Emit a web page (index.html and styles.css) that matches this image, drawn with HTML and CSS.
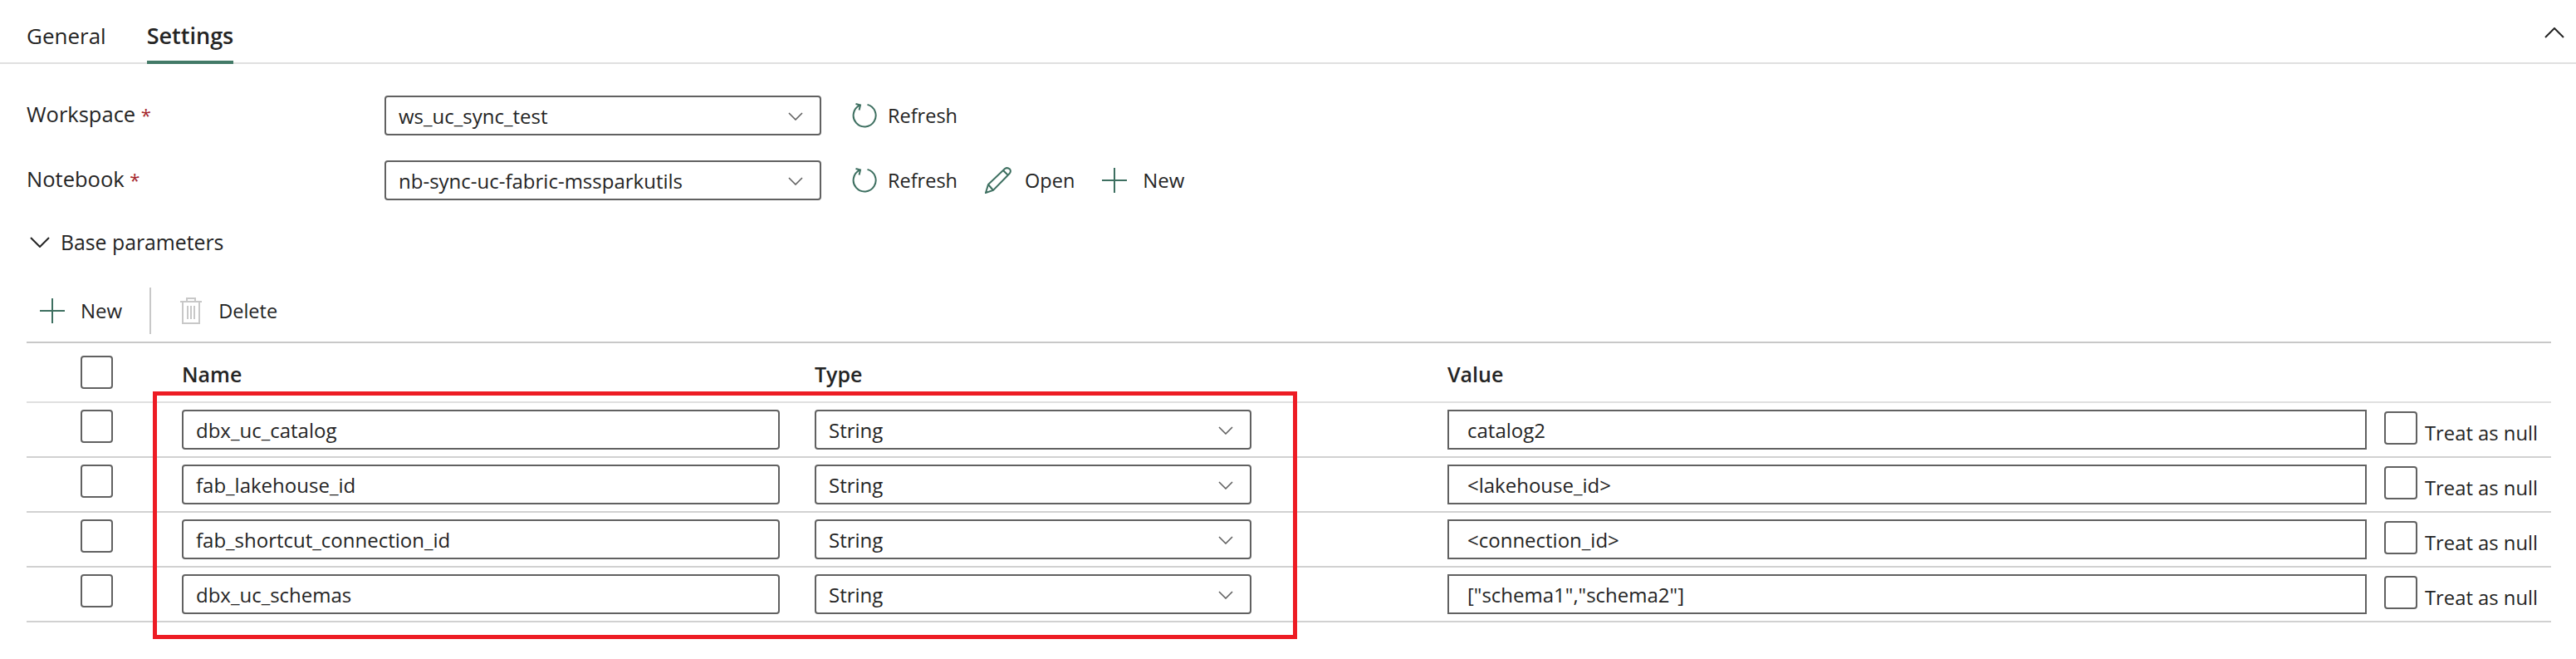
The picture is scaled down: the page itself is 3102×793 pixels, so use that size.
FILE: index.html
```html
<!DOCTYPE html>
<html>

<head>
	<meta http-equiv="Content-Type" content="text/html; charset=UTF-8">
	<title>Settings</title>

	<link rel="stylesheet" href="styles.css">
</head>

<body>
	<div class="tabs">
		<div class="tab">General</div>
		<div class="tab active">Settings</div>
		<svg class="tabs-toggle" width="24" height="13" viewBox="0 0 24 13"><path d="M1 12 L12 1 L23 12" /></svg>
	</div>

	<div class="form-row first">
		<div class="label">Workspace <span class="req">*</span></div>
		<div class="select"><span>ws_uc_sync_test</span><svg class="chev" width="18" height="10" viewBox="0 0 18 10"><path d="M1 1 L9 9 L17 1" /></svg></div>
		<div class="action"><svg class="icon" width="30" height="30" viewBox="0 0 30 30"><path d="M18.5 1.9 A13.5 13.5 0 1 1 9.5 2.7" /><path d="M4.5 1 L10 2.5 L8.6 8.4" /></svg>Refresh</div>
	</div>

	<div class="form-row">
		<div class="label">Notebook <span class="req">*</span></div>
		<div class="select"><span>nb-sync-uc-fabric-mssparkutils</span><svg class="chev" width="18" height="10" viewBox="0 0 18 10"><path d="M1 1 L9 9 L17 1" /></svg></div>
		<div class="action"><svg class="icon" width="30" height="30" viewBox="0 0 30 30"><path d="M18.5 1.9 A13.5 13.5 0 1 1 9.5 2.7" /><path d="M4.5 1 L10 2.5 L8.6 8.4" /></svg>Refresh</div>
		<div class="action pencil"><svg class="icon" width="32" height="32" viewBox="0 0 32 32"><path d="M1 31 L4 21 L24 2 Q27 0 30 2.5 Q32 5.5 29.5 8 L10 28 Z M4 21 L10 28 M22 4 L28 10" /></svg>Open</div>
		<div class="action plus"><svg class="icon" width="30" height="30" viewBox="0 0 30 30"><path d="M15 0 V30 M0 15 H30" /></svg>New</div>
	</div>

	<div class="section-head">
		<svg class="section-chev" width="24" height="13" viewBox="0 0 24 13"><path d="M1 1 L12 12 L23 1" /></svg>
		Base parameters
	</div>

	<div class="toolbar">
		<div class="action plus"><svg class="icon" width="30" height="30" viewBox="0 0 30 30"><path d="M15 0 V30 M0 15 H30" /></svg>New</div>
		<div class="divider"></div>
		<div class="action trash"><svg class="icon" width="26" height="32" viewBox="0 0 26 32"><path d="M0 5 H26 M8 5 V1 H18 V5 M3 5 V31 H23 V5 M9 10 V26 M13 10 V26 M17 10 V26" /></svg>Delete</div>
	</div>

	<div class="params">
		<div class="param-row param-head">
			<div class="cell-check"><div class="check"></div></div>
			<div>Name</div>
			<div>Type</div>
			<div>Value</div>
		</div>

		<div class="param-row">
			<div class="cell-check"><div class="check"></div></div>
			<div class="cell"><div class="field name-field">dbx_uc_catalog</div></div>
			<div class="cell"><div class="select type-select"><span>String</span><svg class="chev" width="18" height="10" viewBox="0 0 18 10"><path d="M1 1 L9 9 L17 1" /></svg></div></div>
			<div class="cell"><div class="field value-field">catalog2</div></div>
			<div class="null-cell"><div class="check"></div><span>Treat as null</span></div>
		</div>

		<div class="param-row">
			<div class="cell-check"><div class="check"></div></div>
			<div class="cell"><div class="field name-field">fab_lakehouse_id</div></div>
			<div class="cell"><div class="select type-select"><span>String</span><svg class="chev" width="18" height="10" viewBox="0 0 18 10"><path d="M1 1 L9 9 L17 1" /></svg></div></div>
			<div class="cell"><div class="field value-field">&lt;lakehouse_id&gt;</div></div>
			<div class="null-cell"><div class="check"></div><span>Treat as null</span></div>
		</div>

		<div class="param-row">
			<div class="cell-check"><div class="check"></div></div>
			<div class="cell"><div class="field name-field">fab_shortcut_connection_id</div></div>
			<div class="cell"><div class="select type-select"><span>String</span><svg class="chev" width="18" height="10" viewBox="0 0 18 10"><path d="M1 1 L9 9 L17 1" /></svg></div></div>
			<div class="cell"><div class="field value-field">&lt;connection_id&gt;</div></div>
			<div class="null-cell"><div class="check"></div><span>Treat as null</span></div>
		</div>

		<div class="param-row">
			<div class="cell-check"><div class="check"></div></div>
			<div class="cell"><div class="field name-field">dbx_uc_schemas</div></div>
			<div class="cell"><div class="select type-select"><span>String</span><svg class="chev" width="18" height="10" viewBox="0 0 18 10"><path d="M1 1 L9 9 L17 1" /></svg></div></div>
			<div class="cell"><div class="field value-field">["schema1","schema2"]</div></div>
			<div class="null-cell"><div class="check"></div><span>Treat as null</span></div>
		</div>

		<!-- annotation drawn over the table -->
		<div class="callout"></div>
	</div>
</body>

</html>
```

FILE: styles.css
```css
* {
	margin: 0;
	padding: 0;
	box-sizing: border-box;
}

body {
	min-height: 793px;
	background: #fff;
	color: #242424;
	font-family: "Open Sans", "Liberation Sans", sans-serif;
	font-size: 24px;
	line-height: 30px;
}

svg {
	display: block;
	flex: none;
	fill: none;
}

/* tabs */
.tabs {
	display: flex;
	align-items: stretch;
	height: 77px;
	padding: 0 14px 0 32px;
	gap: 49px;
	border-bottom: 2px solid #e0e0e0;
	font-size: 26px;
}

.tab {
	padding-top: 28px;
	margin-bottom: -2px;
	border-bottom: 4px solid transparent;
}

.tab.active {
	font-size: 27px;
	font-weight: 600;
	border-bottom-color: #437a67;
}

.tabs-toggle {
	margin: 33px 0 0 auto;
}

.tabs-toggle path,
.section-chev path {
	stroke: #242424;
	stroke-width: 2;
}

/* form rows */
.form-row {
	display: flex;
	align-items: center;
	height: 48px;
	margin-top: 30px;
	padding-left: 32px;
}

.form-row.first {
	margin-top: 38px;
}

.label {
	width: 431px;
	flex: none;
	padding-bottom: 4px;
	font-size: 25.5px;
}

.req {
	color: #a4262c;
	font-size: 22px;
}

.select,
.field {
	display: flex;
	align-items: center;
	justify-content: space-between;
	height: 48px;
	border: 2px solid #616161;
	border-radius: 4px;
	padding: 2px 20px 0 15px;
	background: #fff;
}

.form-row .select {
	width: 526px;
	flex: none;
	margin-right: 37px;
}

.chev path {
	stroke: #616161;
	stroke-width: 1.6;
}

.action {
	display: flex;
	align-items: center;
	gap: 13px;
	margin-right: 33px;
	font-size: 23.5px;
}

.action .icon path {
	stroke: #3d6f60;
	stroke-width: 2;
}

.action.pencil {
	gap: 16px;
}

.action.plus {
	gap: 19px;
	font-size: 24px;
}

/* base parameters */
.section-head {
	display: flex;
	align-items: center;
	gap: 13px;
	height: 30px;
	margin-top: 35px;
	padding-left: 36px;
	font-weight: 500;
	font-size: 24.8px;
}

.toolbar {
	display: flex;
	align-items: center;
	height: 56px;
	margin-top: 40px;
	padding-left: 48px;
}

.divider {
	width: 2px;
	height: 56px;
	background: #c8c8c8;
}

.toolbar .plus {
	margin-right: 33px;
}

.toolbar .trash {
	margin-left: 35px;
	gap: 20px;
}

.action.trash .icon path {
	stroke: #c8c8c8;
}

/* parameter table */
.params {
	position: relative;
	width: 3040px;
	margin: 9px 0 0 32px;
	border-top: 2px solid #c8c8c8;
}

.param-row {
	display: grid;
	grid-template-columns: 187px 762px 762px 1128px 1fr;
	height: 66px;
	padding-top: 8px;
	border-bottom: 2px solid #d1d1d1;
}

.param-head {
	height: 72px;
	padding-top: 15px;
	font-weight: 600;
	font-size: 25px;
	line-height: 44px;
	border-bottom-color: #e0e0e0;
}

.cell-check {
	padding-left: 65px;
}

.check {
	width: 39px;
	height: 40px;
	border: 2px solid #616161;
	border-radius: 4px;
}

.name-field {
	width: 720px;
}

.type-select {
	width: 526px;
}

.value-field {
	width: 1107px;
	border-radius: 0;
	padding-left: 22px;
}

.null-cell {
	display: flex;
	align-items: flex-start;
	gap: 9px;
	padding-top: 2px;
}

.null-cell .check {
	width: 40px;
}

.null-cell span {
	padding-top: 11px;
	font-size: 23.8px;
	white-space: nowrap;
}

.callout {
	position: absolute;
	left: 152px;
	top: 58px;
	width: 1378px;
	height: 298px;
	border: 5px solid #ed1c24;
	pointer-events: none;
}
```
